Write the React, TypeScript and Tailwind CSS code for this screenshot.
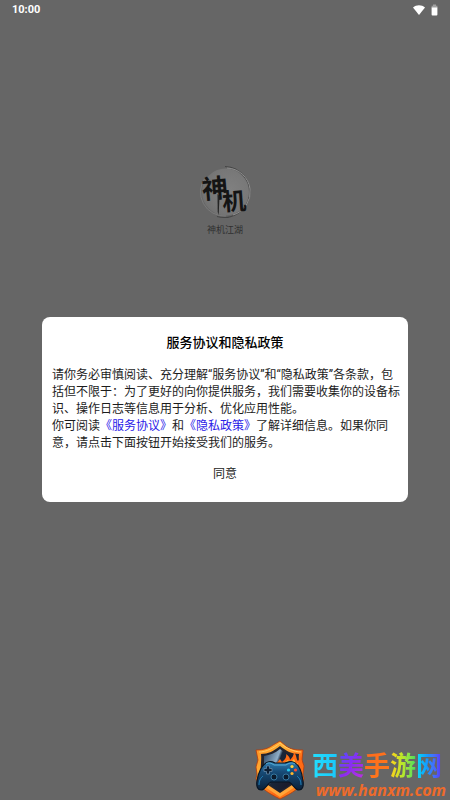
import React from 'react';

const FONT = "font-['Roboto','Noto_Sans_CJK_SC',sans-serif]";

// Each glyph of the site name carries its own gradient
const BRAND = [
  { char: '西', color: 'bg-linear-to-r from-[#22e0ff] to-[#1ac6fa]' },
  { char: '美', color: 'bg-linear-to-br from-[#4a4bff] via-[#8b2cf0] to-[#c32be0]' },
  { char: '手', color: 'bg-linear-to-br from-[#ff6a1c] to-[#ff7a1c]' },
  { char: '游', color: 'bg-linear-to-r from-[#ffd019] via-[#b5e82a] to-[#35dc5a]' },
  { char: '网', color: 'bg-linear-to-r from-[#12dff5] via-[#1c8cff] to-[#5a2cf5]' },
];

const StatusBar: React.FC = () => (
  <header className="flex h-5 items-center justify-between px-3 text-white">
    <time className="text-[11px] leading-5 font-bold">10:00</time>
    <div className="flex items-center gap-1.5">
      <svg className="h-2.5 w-3" viewBox="0 0 12 10" fill="currentColor" aria-label="Wi-Fi">
        <path d="M0 2.6C3.4-.5 8.6-.5 12 2.6L6 10z" />
      </svg>
      <svg className="h-3 w-[7px]" viewBox="0 0 7 12" aria-label="Battery">
        <path d="M2 .5h3v1.3h1.4V4H.6V1.8H2z" fill="#a0a0a0" />
        <path d="M.6 3.5h5.8v7a.9.9 0 0 1-.9.9h-4a.9.9 0 0 1-.9-.9z" fill="#fff" />
      </svg>
    </div>
  </header>
);

const AppLogo: React.FC = () => (
  <svg className="h-14 w-14" viewBox="0 0 56 56" aria-label="神机">
    <defs>
      <radialGradient id="disc" cx="0.6" cy="0.45" r="0.65">
        <stop offset="0" stopColor="#808080" />
        <stop offset="0.7" stopColor="#777" />
        <stop offset="1" stopColor="#707070" />
      </radialGradient>
    </defs>
    <path d="M28 2.500a25.500 25.500 0 1 1-8 50" fill="none" stroke="#454545" strokeWidth="1.1" />
    <circle cx="28.500" cy="28" r="23.500" fill="url(#disc)" />
    <path d="M30 4a24 24 0 0 1 6 47" fill="none" stroke="#8d8d8d" strokeWidth="1" />
    <path d="M29 52A24 24 0 0 1 8 14" fill="none" stroke="#828282" strokeWidth="0.7" />
    <g fill="#141414" fontWeight="700">
      <text x="5" y="34" fontSize="26" transform="rotate(-5 18 25)">神</text>
      <text x="25" y="46" fontSize="24" transform="rotate(-4 37 37)">机</text>
    </g>
    <path d="M20.500 30l2 2-.8 19-1-3z" fill="#242424" />
  </svg>
);

const ShieldLogo: React.FC = () => (
  <svg className="h-[60px] w-[52px] shrink-0" viewBox="0 0 52 60" aria-hidden="true">
    <defs>
      <linearGradient id="fire" x1="0" y1="0" x2="1" y2="1">
        <stop offset="0" stopColor="#ff8a1d" />
        <stop offset="0.35" stopColor="#ffb238" />
        <stop offset="0.65" stopColor="#ff6412" />
        <stop offset="1" stopColor="#ff9d22" />
      </linearGradient>
      <linearGradient id="steel" x1="0" y1="0" x2="1" y2="0.5">
        <stop offset="0" stopColor="#27425f" />
        <stop offset="0.42" stopColor="#8fadc6" />
        <stop offset="0.5" stopColor="#182639" />
        <stop offset="1" stopColor="#1b1a2a" />
      </linearGradient>
      <linearGradient id="pad" x1="0" y1="0" x2="0" y2="1">
        <stop offset="0" stopColor="#2f7fb4" />
        <stop offset="0.35" stopColor="#174c78" />
        <stop offset="1" stopColor="#0a2039" />
      </linearGradient>
    </defs>
    <path d="M26 1l6 5c4 3 9 4 17 4l-1 10 2 6-1 8 1 5c-3 9-12 14-24 20C14 53 6 48 2 39l1-5-1-7 2-7-2-10c8 0 13-2 17-5z" fill="url(#fire)" stroke="#b53c0b" strokeWidth="0.8" />
    <path d="M5 12c7 0 15-4 21-9 6 5 14 9 21 9" fill="none" stroke="#ffcf6a" strokeWidth="0.9" />
    <path d="M26 6c-6 5-12 8-19 8 1 8-2 18 1 26 4 6 10 9 18 14 9-5 15-8 19-15 2-8-1-17 0-25-7 0-13-3-19-8z" fill="#24242d" />
    <path d="M26 9c-5 4-10 6-16 7v22c4 6 9 9 16 13 7-4 12-7 16-13V16c-6-1-11-3-16-7z" fill="url(#steel)" />
    <path d="M18 25c4-1 6-3 8-6l2 3c3-2 5-5 4-8 3 2 4 4 4 6 2-2 4-5 4-8 3 4 2 7 4 9 1-1 2-3 2-5 3 6 2 11 2 17L28 26z" fill="#ff6b14" />
    <path d="M22 26l5-4 2 2 5-4 2 3 4-4 2 5 2-1v6H27z" fill="#ffc13a" />
    <path d="M8 45l18 12 18-12h-6l-12 8-12-8z" fill="#ffa63a" />
    <path d="M14 22c3-1 5 0 7 1h10c3-1 5-2 8-1 6 2 9 11 10 19 1 6-1 9-4 9-4 0-6-6-10-8H17c-4 2-6 8-10 8-3 0-5-3-4-9 1-8 5-17 11-19z" fill="url(#pad)" stroke="#081523" strokeWidth="1.2" />
    <path d="M12 24c3-2 5-1 8 1h12c3-2 6-3 9-1" fill="none" stroke="#5ab3dd" strokeWidth="0.9" />
    <path d="M5 45c0-6 3-8 4-9M47 45c0-6-3-8-4-9" fill="none" stroke="#2595d5" strokeWidth="0.8" />
    <path d="M12.500 26h3v2.500H18v3h-2.500V34h-3v-2.500H10v-3h2.500z" fill="#0c1d32" stroke="#6d94b3" strokeWidth="0.7" />
    <g fill="#0b1b2d" stroke="#3a80aa" strokeWidth="0.9">
      <circle cx="20" cy="37" r="3" />
      <circle cx="32" cy="37" r="3" />
    </g>
    <circle cx="38" cy="26.500" r="1.600" fill="#ffd238" />
    <circle cx="34.500" cy="30" r="1.600" fill="#24c9ef" />
    <circle cx="41.500" cy="30" r="1.600" fill="#ff4b2e" />
    <circle cx="38" cy="33.500" r="1.600" fill="#ffb52b" />
  </svg>
);

const PolicyDialog: React.FC = () => (
  <section
    role="dialog"
    aria-labelledby="policy-title"
    className="flex w-full flex-col rounded-lg bg-white pt-4 pr-1.5 pb-3.5 pl-2.5 text-xs text-[#1c1c1c]"
  >
    <h1 id="policy-title" className="pr-1 text-center text-[13px] leading-5 font-medium text-black">
      服务协议和隐私政策
    </h1>
    <div className="mt-3.5 leading-[17px]">
      <p>
        请你务必审慎阅读、充分理解“服务协议”和“隐私政策”各条款，包括但不限于：为了更好的向你提供服务，我们需要收集你的设备标识、操作日志等信息用于分析、优化应用性能。
      </p>
      <p>
        你可阅读<a href="#terms" className="inline-block text-[#2a20e8]">《服务协议》</a>和<a href="#privacy" className="inline-block text-[#2a20e8]">《隐私政策》</a>了解详细信息。如果你同意，请点击下面按钮开始接受我们的服务。
      </p>
    </div>
    <button type="button" className="mt-2 mr-1 self-center px-6 py-1 leading-5">
      同意
    </button>
  </section>
);

const Watermark: React.FC = () => (
  <footer className="flex items-end justify-end pr-1">
    <ShieldLogo />
    <div className="ml-1.5 flex flex-col items-end">
      <div className="flex pr-1 text-[26px] leading-7 font-bold">
        {BRAND.map((item) => (
          <span key={item.char} className={`bg-clip-text text-transparent ${item.color}`}>
            {item.char}
          </span>
        ))}
      </div>
      <span className="font-['Open_Sans',sans-serif] text-[16px] leading-5 font-bold text-[#ee6b2b] italic">
        www.hanxm.com
      </span>
    </div>
  </footer>
);

export default function App() {
  return (
    <main className={`relative flex min-h-screen flex-col justify-between bg-[#666] ${FONT}`}>
      <div>
        <StatusBar />
        <div className="mt-36 flex flex-col items-center gap-1">
          <AppLogo />
          <span className="text-[9px] leading-3 text-[#303030]">神机江湖</span>
        </div>
      </div>
      <Watermark />
      {/* Modal layer */}
      <div className="absolute inset-0 flex items-center justify-center px-[42px] pt-[19px]">
        <PolicyDialog />
      </div>
    </main>
  );
}
